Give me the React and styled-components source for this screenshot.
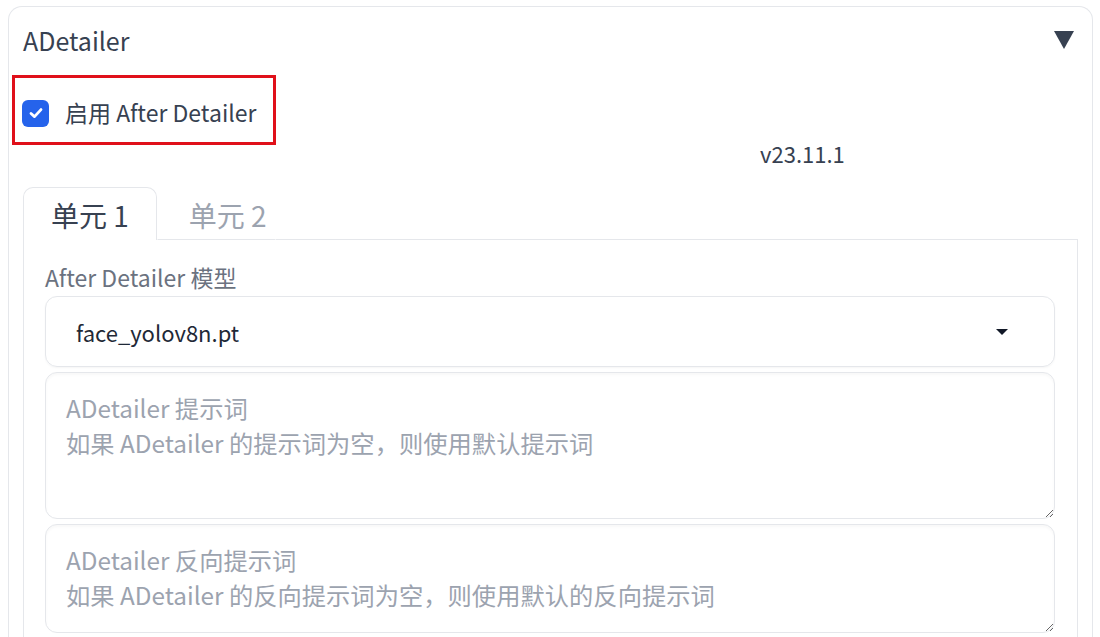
import React from 'react';
import styled, { createGlobalStyle } from 'styled-components';

const GlobalStyle = createGlobalStyle`
  html, body {
    margin: 0;
    background: #fff;
    overflow: hidden;
  }
  body {
    font-family: "Noto Sans CJK SC", "Noto Sans", sans-serif;
    color: #374151;
  }
`

const Page = styled.div`
  padding: 6px 7px 0 8px;
`
const Panel = styled.div`
  border: 1.5px solid #e5e7eb;
  border-bottom: none;
  border-radius: 14px 14px 0 0;
  padding: 0 14px 0 14px;
  height: 700px;
`
const Header = styled.div`
  display: flex;
  justify-content: space-between;
  align-items: center;
  height: 68px;
  padding-right: 4px;
`
const Title = styled.span`
  font-size: 25px;
  color: #374151;
  margin-top: -2px;
`
const Arrow = styled.span`
  width: 0;
  height: 0;
  border-left: 10px solid transparent;
  border-right: 10px solid transparent;
  border-top: 18px solid #374151;
  margin-top: -2px;
`
const Highlight = styled.label`
  display: inline-flex;
  align-items: center;
  gap: 16px;
  margin-left: -11px;
  width: 251px;
  height: 64px;
  border: 3px solid #e0101a;
  padding: 0 0 0 7px;
  font-size: 23px;
  color: #374151;
`
const CheckBox = styled.span`
  width: 27px;
  height: 27px;
  border-radius: 6px;
  background: #2563eb;
  display: flex;
  align-items: center;
  justify-content: center;
  margin-top: 6px;
`
const CheckLabel = styled.span`
  margin-top: 3px;
`
const VersionRow = styled.div`
  display: flex;
  padding-left: 737px;
  height: 22px;
  margin-top: -3px;
  align-items: center;
  font-size: 22px;
  color: #374151;
`
const Tabs = styled.div`
  margin-top: 23px;
  display: flex;
  align-items: flex-end;
  height: 53px;
`
const Tab = styled.div`
  height: 53px;
  box-sizing: border-box;
  display: flex;
  align-items: center;
  font-size: 28px;
  color: ${p => (p.active ? '#374151' : '#9ca3af')};
  border: 1.5px solid ${p => (p.active ? '#e5e7eb' : 'transparent')};
  border-bottom: ${p => (p.active ? 'none' : '1.5px solid #e5e7eb')};
  border-radius: 10px 10px 0 0;
  padding-top: 2px;
  padding-right: ${p => (p.active ? '27px' : '8px')};
  padding-left: ${p => (p.active ? '27px' : '31px')};
`
const TabFill = styled.div`
  flex: 1;
  border-bottom: 1.5px solid #e5e7eb;
`
const TabBody = styled.div`
  border: 1.5px solid #e5e7eb;
  border-top: none;
  padding: 24px 22px 20px 21px;
  display: flex;
  flex-direction: column;
  gap: 5px;
  height: 600px;
`
const FieldLabel = styled.div`
  font-size: 23px;
  line-height: 26px;
  color: #6b7280;
  margin-bottom: 1px;
`
const Select = styled.div`
  height: 71px;
  box-sizing: border-box;
  border: 1.5px solid #e5e7eb;
  border-radius: 12px;
  box-shadow: 0 1px 2px rgba(0, 0, 0, 0.04);
  display: flex;
  align-items: center;
  justify-content: space-between;
  padding: 0 46px 0 30px;
  font-size: 22px;
  color: #1f2937;
`
const Caret = styled.span`
  width: 0;
  height: 0;
  border-left: 6px solid transparent;
  border-right: 6px solid transparent;
  border-top: 6px solid #111827;
`
const TextArea = styled.textarea`
  display: block;
  box-sizing: border-box;
  width: 100%;
  height: ${p => p.h}px;
  border: 1.5px solid #e5e7eb;
  border-radius: 12px;
  box-shadow: inset 0 2px 3px rgba(0, 0, 0, 0.03);
  padding: 17px 20px;
  font-family: inherit;
  font-size: 24.3px;
  line-height: 35px;
  resize: vertical;
  outline: none;
  &::placeholder {
    color: #9ca3af;
  }
`

export default function App() {
  return (
    <Page>
      <GlobalStyle />
      <Panel>
        <Header>
          <Title>ADetailer</Title>
          <Arrow />
        </Header>
        <Highlight>
          <CheckBox>
            <svg width="18" height="18" viewBox="0 0 18 18">
              <path d="M4 9.5 L7.5 12.6 L14 5.6" fill="none" stroke="#fff" strokeWidth="2.8" strokeLinecap="round" strokeLinejoin="round" />
            </svg>
          </CheckBox>
          <CheckLabel>启用 After Detailer</CheckLabel>
        </Highlight>
        <VersionRow>v23.11.1</VersionRow>
        <Tabs>
          <Tab active>单元 1</Tab>
          <Tab>单元 2</Tab>
          <TabFill />
        </Tabs>
        <TabBody>
          <FieldLabel>After Detailer 模型</FieldLabel>
          <Select>
            <span>face_yolov8n.pt</span>
            <Caret />
          </Select>
          <TextArea h={147} placeholder={'ADetailer 提示词\n如果 ADetailer 的提示词为空，则使用默认提示词'} />
          <TextArea h={109} placeholder={'ADetailer 反向提示词\n如果 ADetailer 的反向提示词为空，则使用默认的反向提示词'} />
        </TabBody>
      </Panel>
    </Page>
  );
}
